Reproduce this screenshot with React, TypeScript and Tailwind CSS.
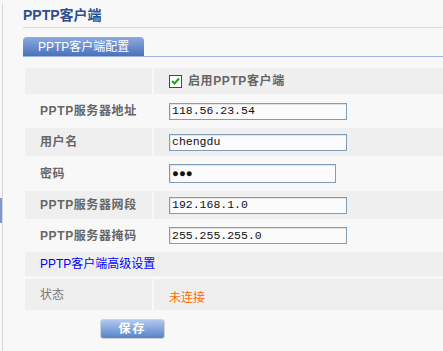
const font = "font-['Liberation_Sans','Noto_Sans_CJK_SC',sans-serif]";

function Field({ value, wide = true, tall = false }: { value: string; wide?: boolean; tall?: boolean }) {
	return (
		<div
			className={`${wide ? "w-[178px]" : "w-[167px]"} ${tall ? "h-[19px]" : "h-[17px]"} flex items-center border border-[#7f9db9] bg-[#fbfbfb] pl-[2px] font-['Liberation_Mono',monospace] text-[11.5px] text-[#111] shadow-[inset_1px_1px_0_#e4e4e4]`}
		>
			{value}
		</div>
	);
}

function Row({
	label,
	shaded,
	h,
	children,
}: {
	label: string;
	shaded: boolean;
	h: string;
	children: React.ReactNode;
}) {
	const bg = shaded ? "bg-[#efefef]" : "";
	return (
		<div className={`flex gap-[2px] ${h}`}>
			<div className={`w-[127px] shrink-0 flex items-center pl-[15px] ${bg}`}>
				<span className="text-[12px] font-bold tracking-[0.6px] text-[#666]">{label}</span>
			</div>
			<div className={`flex-1 flex items-center pl-[15px] ${bg}`}>{children}</div>
		</div>
	);
}

export default function App() {
	return (
		<div className={`w-[443px] h-[351px] overflow-hidden bg-[#f8f8f8] flex ${font}`}>
			<div className="w-[2px] shrink-0">
				<div className="mt-[198px] h-[25px] bg-[#7b98d4]" />
			</div>
			<div className="w-[1px] shrink-0 mt-[3px] bg-[#d6d6d6] rounded-tl" />
			<div className="flex-1 pl-[20px]">
				<div className="h-[28px] pt-[3px] flex items-center border-b border-[#dadada]">
					<span className="text-[14px] font-bold text-[#2d4f8e]">PPTP客户端</span>
				</div>
				<div className="mt-[9px] border-b border-[#9fb6e2]">
					<div className="w-[121px] h-[19px] rounded-t-[4px] bg-gradient-to-b from-[#8dabe0] to-[#4a72b9] flex items-center pl-[15px] text-[12px] text-white">
						PPTP客户端配置
					</div>
				</div>

				<div className="mt-[11px] ml-[2px] flex flex-col gap-[2px]">
					<Row label="" shaded h="h-[26px]">
						<div className="flex items-center gap-[6px]">
							<div className="w-[13px] h-[13px] border border-[#1c5180] bg-white flex items-center justify-center">
								<svg width="9" height="8" viewBox="0 0 9 8">
									<path d="M1 4 L3.5 6.5 L8 1.5" fill="none" stroke="#21a121" strokeWidth="2" />
								</svg>
							</div>
							<span className="text-[12px] font-bold tracking-[0.6px] text-[#666]">启用PPTP客户端</span>
						</div>
					</Row>
					<Row label="PPTP服务器地址" shaded={false} h="h-[30px]">
						<Field value="118.56.23.54" />
					</Row>
					<Row label="用户名" shaded h="h-[28px]">
						<Field value="chengdu" />
					</Row>
					<Row label="密码" shaded={false} h="h-[31px]">
						<Field value="●●●" wide={false} tall />
					</Row>
					<Row label="PPTP服务器网段" shaded h="h-[28px]">
						<Field value="192.168.1.0" />
					</Row>
					<Row label="PPTP服务器掩码" shaded={false} h="h-[29px]">
						<Field value="255.255.255.0" />
					</Row>
					<div className="h-[24px] bg-[#efefef] flex items-center pl-[15px] text-[12px] text-[#0000ff]">
						PPTP客户端高级设置
					</div>
					<div className="mt-[1px] flex gap-[2px] h-[31px]">
						<div className="w-[127px] shrink-0 flex items-center pl-[15px] bg-[#efefef] text-[12px] text-[#777]">
							状态
						</div>
						<div className="flex-1 flex items-center pl-[15px] pt-[6px] bg-[#efefef] text-[12px] text-[#ff6a00]">
							未连接
						</div>
					</div>
				</div>

				<div className="mt-[9px] ml-[77px]">
					<div className="w-[65px] h-[20px] rounded-[3px] border border-[#d4d4d4] bg-gradient-to-b from-[#b0c8ee] to-[#5783cb] flex items-center justify-center text-[12px] font-bold tracking-[2px] text-white">
						保存
					</div>
				</div>
			</div>
		</div>
	);
}
